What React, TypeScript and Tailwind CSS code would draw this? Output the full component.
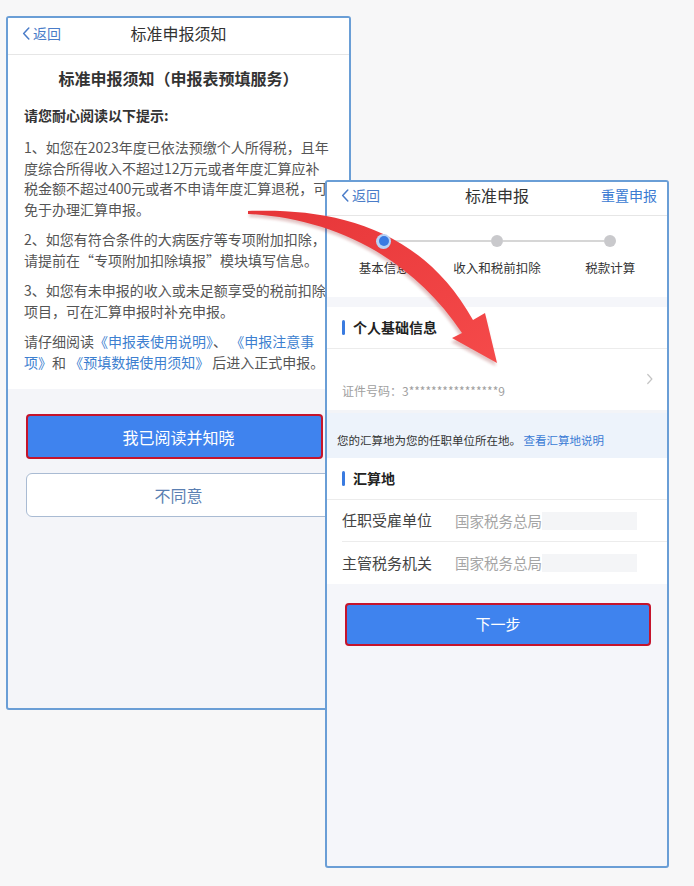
import React from "react";

const Chevron = ({ className = "" }: { className?: string }) => (
  <svg viewBox="0 0 8 14" className={className} fill="none" stroke="currentColor" strokeWidth="1.6" strokeLinecap="round" strokeLinejoin="round">
    <polyline points="7,1 1.5,7 7,13" />
  </svg>
);

const Header = ({ title, right, h }: { title: string; right?: string; h: string }) => (
  <div className={`grid grid-cols-[1fr_auto_1fr] items-center bg-white border-b border-[#e6e6e6] ${h}`}>
    <div className="flex items-center gap-[3px] pl-[14px] text-[#4a7cc8]">
      <Chevron className="w-[8px] h-[13px]" />
      <span className="text-[14px] leading-[20px]">返回</span>
    </div>
    <div className="text-[16px] leading-[22px] text-[#333]">{title}</div>
    <div className="flex justify-end pr-[10px] text-[14px] leading-[20px] text-[#3b7bd2]">{right}</div>
  </div>
);

const Link = ({ children }: { children: React.ReactNode }) => <span className="text-[#3d7fd0]">{children}</span>;

function LeftPhone() {
  const p = "text-[14px] leading-[20.5px] text-[#555] whitespace-nowrap";
  return (
    <div className="w-[345px] h-[694px] shrink-0 border-2 border-[#6a9ed6] rounded-[3px] bg-[#f4f5f9] flex flex-col overflow-hidden">
      <Header title="标准申报须知" h="h-[37px] pb-[6px]" />
      <div className="bg-white pl-[16px] pt-[12px] pb-[17px] flex flex-col">
        <div className="text-[16px] leading-[22px] font-semibold text-[#333] text-center pr-[16px]">标准申报须知（申报表预填服务）</div>
        <div className="mt-[16px] text-[14px] leading-[20px] font-bold text-[#333]">请您耐心阅读以下提示:</div>
        <div className={`mt-[12px] ${p}`}>
          <div>1、如您在2023年度已依法预缴个人所得税，且年</div>
          <div>度综合所得收入不超过12万元或者年度汇算应补</div>
          <div>税金额不超过400元或者不申请年度汇算退税，可</div>
          <div>免于办理汇算申报。</div>
        </div>
        <div className={`mt-[10px] ${p}`}>
          <div>2、如您有符合条件的大病医疗等专项附加扣除，</div>
          <div>请提前在“专项附加扣除填报”模块填写信息。</div>
        </div>
        <div className={`mt-[10px] ${p}`}>
          <div>3、如您有未申报的收入或未足额享受的税前扣除</div>
          <div>项目，可在汇算申报时补充申报。</div>
        </div>
        <div className={`mt-[10px] ${p}`}>
          <div>请仔细阅读<Link>《申报表使用说明》</Link>、 <Link>《申报注意事</Link></div>
          <div><Link>项》</Link>和 <Link>《预填数据使用须知》</Link> 后进入正式申报。</div>
        </div>
      </div>
      <div className="mt-[25px] ml-[18px] mr-[26px] h-[45px] rounded-[4px] border-2 border-[#c5142c] bg-[#3f83ee] flex items-center justify-center pl-[8px] text-white text-[16px]">我已阅读并知晓</div>
      <div className="mt-[14px] ml-[18px] mr-[18px] h-[44px] rounded-[6px] border border-[#a9bbd3] bg-white flex items-center justify-center text-[#5a7fb2] text-[16px]">不同意</div>
    </div>
  );
}

const Step = ({ label, active, first, last }: { label: string; active?: boolean; first?: boolean; last?: boolean }) => (
  <div className="flex flex-col items-center">
    <div className="w-full h-[16px] flex items-center">
      <div className={`flex-1 h-[2px] ${first ? "" : "bg-[#d6d6d6]"}`} />
      {active ? (
        <div className="relative z-30 w-[15px] h-[15px] rounded-full bg-[#b9d3f5] flex items-center justify-center">
          <div className="w-[10px] h-[10px] rounded-full bg-[#3a7be2]" />
        </div>
      ) : (
        <div className="w-[12px] h-[12px] rounded-full bg-[#c9c9cc]" />
      )}
      <div className={`flex-1 h-[2px] ${last ? "" : "bg-[#d6d6d6]"}`} />
    </div>
    <div className="mt-[10px] text-[12.5px] leading-[18px] text-[#333]">{label}</div>
  </div>
);

const SectionTitle = ({ children }: { children: React.ReactNode }) => (
  <div className="h-[42px] bg-white border-b border-[#ececec] flex items-center pl-[15px] gap-[8px]">
    <div className="w-[3px] h-[15px] rounded-[2px] bg-[#3a7be0]" />
    <div className="text-[14px] font-bold text-[#222]">{children}</div>
  </div>
);

const Field = ({ label, border }: { label: string; border?: boolean }) => (
  <div className="pl-[15px] bg-white">
    <div className={`h-[42px] flex items-center ${border ? "border-b border-[#ececec]" : ""}`}>
      <div className="w-[113px] text-[15px] text-[#444]">{label}</div>
      <div className="text-[14.5px] text-[#a5a5a5]">国家税务总局</div>
      <div className="w-[95px] h-[18px] bg-[#f4f5f7]" />
    </div>
  </div>
);

function RightPhone() {
  return (
    <div className="relative w-[344px] h-[688px] shrink-0 mt-[164px] -ml-[26px] border-2 border-[#6a9ed6] rounded-[3px] bg-[#f5f6fa] flex flex-col overflow-hidden">
      <Header title="标准申报" right="重置申报" h="h-[34px] pb-[7px]" />
      <div className="h-[81px] bg-white pt-[17px] grid grid-cols-3">
        <Step label="基本信息" active first />
        <Step label="收入和税前扣除" />
        <Step label="税款计算" last />
      </div>
      <div className="h-[10px]" />
      <SectionTitle>个人基础信息</SectionTitle>
      <div className="h-[61px] bg-white flex pl-[15px] pr-[14px]">
        <div className="flex-1 pt-[33px] text-[12px] leading-[18px] text-[#a0a0a0]">证件号码：3****************9</div>
        <Chevron className="w-[6px] h-[12px] mt-[24px] rotate-180 text-[#c4c4c4]" />
      </div>
      <div className="h-[48px] bg-[#edf3fb] border-t-[3px] border-[#f3f4f7] pl-[10px] pt-[19px] text-[11.5px] leading-[16px] text-[#333]">
        您的汇算地为您的任职单位所在地。 <span className="text-[#3a7bd5]">查看汇算地说明</span>
      </div>
      <SectionTitle>汇算地</SectionTitle>
      <Field label="任职受雇单位" border />
      <Field label="主管税务机关" />
      <div className="mt-[19px] ml-[18px] mr-[16px] h-[43px] rounded-[4px] border-2 border-[#c5142c] bg-[#3f83ee] flex items-center justify-center text-white text-[15px]">下一步</div>
    </div>
  );
}

export default function App() {
  return (
    <div className="relative w-[694px] h-[886px] overflow-hidden bg-[#f7f7f8] font-['Noto_Sans_CJK_SC',sans-serif]">
      <div className="flex items-start pt-[16px] pl-[6px]">
        <LeftPhone />
        <RightPhone />
      </div>
      <svg className="absolute inset-0 z-20 pointer-events-none" width="694" height="886" viewBox="0 0 694 886">
        <defs>
          <linearGradient id="ag" x1="0" y1="0" x2="1" y2="1">
            <stop offset="0" stopColor="#e63538" />
            <stop offset="1" stopColor="#f54a4a" />
          </linearGradient>
          <filter id="sh" x="-10%" y="-10%" width="120%" height="120%">
            <feGaussianBlur stdDeviation="1.5" />
          </filter>
        </defs>
        <path
          d="M 249 214 C 331 211, 421 228, 472 324 L 485 317 L 496 366 L 451 342 L 461 337 C 409 258, 330 221, 249 217 Z"
          fill="#8a1010"
          opacity="0.25"
          filter="url(#sh)"
        />
        <path
          d="M 248 211 C 330 208, 420 225, 473 320 L 485 313 L 497 363 L 452 338 L 462 333 C 410 255, 330 218, 248 214 Z"
          fill="url(#ag)"
        />
      </svg>
    </div>
  );
}
